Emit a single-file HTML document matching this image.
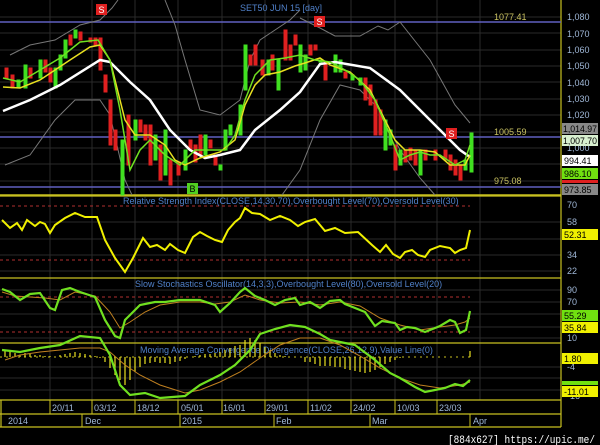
<!DOCTYPE html>
<html><head><meta charset="utf-8"><style>
html,body{margin:0;padding:0;background:#000;}
svg{display:block;font-family:"Liberation Sans",sans-serif;}
</style></head><body>
<svg width="600" height="445" viewBox="0 0 600 445" xmlns="http://www.w3.org/2000/svg">
<rect width="600" height="445" fill="#000"/>
<g stroke="#2a2a2a" stroke-width="1">
<path d="M50 0V400M92 0V400M135 0V400M178 0V400M222 0V400M265 0V400M308 0V400M351 0V400M395 0V400M437 0V400M480 0V400"/>
<path d="M0 17H561M0 33H561M0 50H561M0 66H561M0 82H561M0 99H561M0 115H561M0 132H561M0 148H561M0 164H561M0 181H561"/>
<path d="M0 222H561M0 239H561M0 255H561M0 271H561M0 290H561M0 302H561M0 314H561M0 327H561M0 338H561M0 367H561M0 378H561M0 390H561"/>
</g>
<g stroke="#c8c020" stroke-width="1.2" fill="none">
<path d="M561 0V427M0 196H561M0 278H561M0 343H561M0 400H561M0 414H561M0 427H561M1 400V427"/>
</g>
<g stroke="#6060c0" stroke-width="1.5"><path d="M0 22H561M0 137H561M0 187H561"/></g>
<path d="M0 195H561" stroke="#c8c020" stroke-width="1.5"/>
<g stroke="#b03030" stroke-dasharray="3,3"><path d="M0 206H470M0 260H470M0 297H470M0 332H470"/></g>
<path d="M0 357H470" stroke="#c8c020" stroke-dasharray="2,4"/>
<g stroke="#777" fill="none" stroke-width="1">
<polyline points="10,55 30,45 55,40 80,25 100,20 112,8 118,0"/>
<polyline points="165,0 175,25 185,60 200,110 220,115 240,100 250,60 260,40 275,30 290,20 300,10"/>
<polyline points="300,18 320,28 335,36 360,36 378,26 388,30 400,22 430,60 455,105 470,123"/>
<polyline points="5,165 30,155 55,120 75,100 100,100 110,115 125,180 132,195"/>
<polyline points="282,195 300,170 320,120 340,85 360,90 380,110 400,150 420,178 435,195"/>
</g>
<g stroke-width="1">
<g fill="#e02020" stroke="#e02020">
<rect x="5" y="68" width="3" height="10"/><rect x="11" y="75" width="3" height="13"/><rect x="29" y="68" width="3" height="10"/><rect x="44" y="60" width="3" height="12"/><rect x="49" y="68" width="3" height="14"/><rect x="69" y="35" width="3" height="10"/><rect x="79" y="32" width="3" height="8"/><rect x="89" y="38" width="3" height="4"/><rect x="94" y="38" width="3" height="7"/><rect x="99" y="38" width="3" height="32"/><rect x="104" y="75" width="3" height="17"/><rect x="109" y="100" width="3" height="45"/><rect x="114" y="130" width="3" height="20"/><rect x="127" y="115" width="3" height="50"/><rect x="139" y="120" width="3" height="12"/><rect x="144" y="125" width="3" height="15"/><rect x="149" y="125" width="3" height="40"/><rect x="159" y="145" width="3" height="35"/><rect x="169" y="160" width="3" height="25"/><rect x="177" y="162" width="3" height="13"/><rect x="189" y="140" width="3" height="10"/><rect x="194" y="145" width="3" height="17"/><rect x="199" y="135" width="3" height="20"/><rect x="209" y="140" width="3" height="8"/><rect x="214" y="155" width="3" height="10"/><rect x="249" y="55" width="3" height="10"/><rect x="254" y="45" width="3" height="20"/><rect x="261" y="60" width="3" height="15"/><rect x="271" y="55" width="3" height="15"/><rect x="284" y="30" width="3" height="30"/><rect x="289" y="45" width="3" height="15"/><rect x="294" y="35" width="3" height="10"/><rect x="309" y="45" width="3" height="10"/><rect x="314" y="45" width="3" height="5"/><rect x="324" y="62" width="3" height="18"/><rect x="344" y="72" width="3" height="6"/><rect x="364" y="78" width="3" height="22"/><rect x="369" y="85" width="3" height="20"/><rect x="374" y="100" width="3" height="35"/><rect x="379" y="110" width="3" height="25"/><rect x="394" y="145" width="3" height="25"/><rect x="404" y="150" width="3" height="12"/><rect x="409" y="148" width="3" height="12"/><rect x="414" y="150" width="3" height="15"/><rect x="424" y="150" width="3" height="10"/><rect x="434" y="150" width="3" height="10"/><rect x="444" y="150" width="3" height="10"/><rect x="449" y="155" width="3" height="15"/><rect x="454" y="160" width="3" height="15"/><rect x="459" y="165" width="3" height="15"/>
</g>
<g fill="#40e020" stroke="#40e020">
<rect x="17" y="80" width="3" height="8"/><rect x="24" y="65" width="3" height="23"/><rect x="39" y="60" width="3" height="18"/><rect x="54" y="68" width="3" height="20"/><rect x="59" y="55" width="3" height="15"/><rect x="64" y="40" width="3" height="18"/><rect x="74" y="30" width="3" height="8"/><rect x="121" y="140" width="3" height="55"/><rect x="134" y="120" width="3" height="20"/><rect x="154" y="135" width="3" height="25"/><rect x="164" y="130" width="3" height="45"/><rect x="184" y="150" width="3" height="20"/><rect x="204" y="135" width="3" height="20"/><rect x="219" y="165" width="3" height="5"/><rect x="224" y="130" width="3" height="20"/><rect x="229" y="125" width="3" height="10"/><rect x="239" y="105" width="3" height="30"/><rect x="244" y="45" width="3" height="45"/><rect x="267" y="60" width="3" height="15"/><rect x="277" y="60" width="3" height="30"/><rect x="299" y="45" width="3" height="27"/><rect x="304" y="55" width="3" height="15"/><rect x="319" y="60" width="3" height="2"/><rect x="334" y="55" width="3" height="17"/><rect x="339" y="60" width="3" height="12"/><rect x="351" y="75" width="3" height="5"/><rect x="359" y="78" width="3" height="7"/><rect x="384" y="120" width="3" height="30"/><rect x="389" y="130" width="3" height="15"/><rect x="399" y="150" width="3" height="15"/><rect x="419" y="150" width="3" height="25"/><rect x="464" y="160" width="3" height="10"/><rect x="470" y="133" width="3" height="39"/>
</g>
</g>
<polyline fill="none" stroke="#fff" stroke-width="2.5" points="3,111 30,100 60,85 100,60 110,62 130,82 150,100 170,130 190,150 205,158 220,155 240,150 255,130 280,110 300,92 320,64 335,62 370,68 400,90 430,120 460,150 470,157"/>
<polyline fill="none" stroke="#e8e020" stroke-width="1.5" points="3,87 20,88 40,80 55,70 70,60 90,47 100,45 110,60 125,120 135,135 150,135 165,145 175,160 185,165 200,158 220,152 235,140 245,105 255,85 265,75 280,72 295,66 305,63 320,58 330,65 350,72 370,90 385,120 395,140 405,150 420,150 435,152 450,165 465,165 470,155"/>
<polyline fill="none" stroke="#70e020" stroke-width="1.5" points="3,78 20,82 40,70 60,58 80,42 98,40 110,60 120,110 130,170 140,150 150,140 165,155 180,165 195,150 210,150 225,150 235,135 245,100 255,75 270,60 285,58 300,55 315,60 330,62 345,70 360,80 375,100 390,135 400,160 410,155 420,152 430,155 440,155 455,165 465,160 470,145"/>
<rect x="96" y="4" width="11" height="11" fill="#e02020"/><text x="101.5" y="13" font-size="9" fill="#fff" text-anchor="middle">S</text>
<rect x="314" y="16" width="11" height="11" fill="#e02020"/><text x="319.5" y="25" font-size="9" fill="#fff" text-anchor="middle">S</text>
<rect x="446" y="128" width="11" height="11" fill="#e02020"/><text x="451.5" y="137" font-size="9" fill="#fff" text-anchor="middle">S</text>
<rect x="187" y="183" width="11" height="11" fill="#50d020"/><text x="192.5" y="192" font-size="9" fill="#000" text-anchor="middle">B</text>
<g font-size="9" fill="#5080c8">
<text x="240" y="11">SET50 JUN 15   [day]</text>
<text x="123" y="204">Relative Strength Index(CLOSE,14,30,70),Overbought Level(70),Oversold Level(30)</text>
<text x="135" y="287">Slow Stochastics Oscillator(14,3,3),Overbought Level(80),Oversold Level(20)</text>
<text x="140" y="353">Moving Average Convergence Divergence(CLOSE,26,12,9),Value Line(0)</text>
</g>
<g font-size="9" fill="#c8c060">
<text x="494" y="20">1077.41</text><text x="494" y="135">1005.59</text><text x="494" y="184">975.08</text>
</g>
<g font-size="9" fill="#a0b8d8">
<text x="567" y="20">1,080</text><text x="567" y="37">1,070</text><text x="567" y="53">1,060</text><text x="567" y="69">1,050</text><text x="567" y="86">1,040</text><text x="567" y="102">1,030</text><text x="567" y="118">1,020</text><text x="567" y="151">1,000</text>
<text x="567" y="208">70</text><text x="567" y="225">58</text><text x="567" y="258">34</text><text x="567" y="274">22</text>
<text x="567" y="293">90</text><text x="567" y="305">70</text><text x="567" y="341">10</text>
<text x="567" y="370">-4</text><text x="567" y="399">-16</text>
</g>
<g font-size="9">
<rect x="562" y="123" width="36" height="11" fill="#888"/><text x="563" y="132" fill="#000" textLength="34" lengthAdjust="spacingAndGlyphs">1,014.97</text>
<rect x="562" y="135" width="36" height="11" fill="#d8f0d0"/><text x="563" y="144" fill="#000" textLength="34" lengthAdjust="spacingAndGlyphs">1,007.70</text>
<rect x="562" y="155" width="36" height="11" fill="#fff"/><text x="564" y="164" fill="#000">994.41</text>
<rect x="562" y="168" width="36" height="11" fill="#70e010"/><text x="564" y="177" fill="#000">986.10</text>
<rect x="562" y="180" width="36" height="3" fill="#e02020"/>
<rect x="562" y="184" width="36" height="11" fill="#888"/><text x="564" y="193" fill="#000">973.85</text>
<rect x="562" y="229" width="36" height="11" fill="#f0f000"/><text x="564" y="238" fill="#000">52.31</text>
<rect x="562" y="310" width="36" height="11" fill="#70e010"/><text x="564" y="319" fill="#000">55.29</text>
<rect x="562" y="322" width="36" height="11" fill="#f0f000"/><text x="564" y="331" fill="#000">35.84</text>
<rect x="562" y="353" width="36" height="11" fill="#f0f000"/><text x="564" y="362" fill="#000">1.80</text>
<rect x="562" y="381" width="36" height="4" fill="#70e010"/>
<rect x="562" y="386" width="36" height="11" fill="#f0f000"/><text x="564" y="395" fill="#000">-11.01</text>
</g>
<polyline fill="none" stroke="#f0f000" stroke-width="2" points="2,220 10,228 17,223 22,230 27,220 35,226 40,222 45,224 50,233 55,225 65,218 75,213 85,217 97,217 105,240 115,258 125,272 133,258 143,238 150,247 157,245 165,250 170,244 178,250 185,253 193,237 200,232 207,236 215,240 222,242 228,230 235,222 240,218 245,208 252,213 260,214 270,220 280,216 290,220 298,226 305,222 315,219 325,231 335,228 345,233 358,232 372,245 380,252 386,245 393,254 400,258 405,252 412,250 418,255 425,257 430,250 440,246 450,248 455,253 460,250 466,248 470,230"/>
<polyline fill="none" stroke="#c08020" stroke-width="1" points="2,292 15,296 30,297 45,298 60,300 75,292 95,296 110,312 120,328 130,322 145,312 160,305 180,302 200,302 215,304 230,302 245,295 260,300 280,303 300,302 320,305 340,302 360,306 380,318 400,325 420,330 440,327 455,325 465,322 470,318"/>
<polyline fill="none" stroke="#70e020" stroke-width="2.2" points="2,289 10,292 20,300 30,294 40,293 50,308 55,310 62,290 70,288 80,292 95,297 105,320 115,336 120,338 125,320 140,305 155,302 165,302 180,300 200,300 215,305 220,312 230,303 240,292 245,288 255,296 265,300 275,305 285,300 295,298 300,305 310,302 320,308 330,301 340,300 345,304 355,308 365,312 375,326 382,321 395,323 400,330 407,327 415,328 425,332 430,330 440,326 450,320 455,322 460,333 466,330 470,311"/>
<path stroke="#e8e020" stroke-width="1.2" d="M5 357V350M10 357V352M15 357V353M20 357V355M25 357V353M30 357V354M35 357V355M40 357V355M45 357V356M50 357V356M55 357V357M60 357V355M65 357V354M70 357V353M75 357V352M80 357V353M85 357V354M90 357V355M95 357V356M100 357V358M105 357V362M110 357V368M115 357V375M120 357V380M125 357V385M130 357V380M135 357V372M140 357V367M145 357V364M150 357V363M155 357V362M160 357V363M165 357V363M170 357V364M175 357V362M180 357V361M185 357V359M190 357V357M195 357V356M200 357V355M205 357V354M210 357V354M215 357V353M220 357V352M225 357V350M230 357V348M235 357V346M240 357V345M245 357V340M250 357V338M255 357V340M260 357V343M265 357V347M270 357V350M275 357V353M280 357V355M285 357V356M290 357V357M305 357V362M310 357V362M315 357V364M320 357V366M325 357V366M330 357V366M335 357V367M340 357V367M345 357V369M350 357V370M355 357V371M360 357V372M365 357V373M370 357V372M375 357V370M380 357V367M385 357V364M390 357V362M395 357V360M400 357V358M470 357V351"/>
<polyline fill="none" stroke="#c08020" stroke-width="1" points="5,360 20,355 40,352 60,350 80,348 100,348 110,352 125,365 140,375 160,385 185,393 200,390 220,382 240,372 260,358 280,345 300,338 320,338 340,345 360,356 380,368 400,378 420,385 440,388 460,385 470,382"/>
<polyline fill="none" stroke="#70e020" stroke-width="2.2" points="2,350 20,352 40,348 60,345 80,336 100,338 110,355 120,385 130,395 145,393 160,398 185,396 200,385 220,375 235,365 250,350 260,334 275,329 290,325 305,327 320,334 330,340 345,343 355,345 375,360 390,373 400,378 415,387 425,392 435,390 445,388 455,384 463,386 470,380"/>
<g font-size="9" fill="#a0b8d8">
<path d="M50 400V414M92 400V414M135 400V414M178 400V414M222 400V414M265 400V414M308 400V414M351 400V414M395 400V414M437 400V414M82 414V427M180 414V427M274 414V427M370 414V427M470 414V427" stroke="#c8c020"/>
<text x="52" y="411">20/11</text><text x="94" y="411">03/12</text><text x="137" y="411">18/12</text><text x="181" y="411">05/01</text><text x="223" y="411">16/01</text><text x="266" y="411">29/01</text><text x="310" y="411">11/02</text><text x="353" y="411">24/02</text><text x="397" y="411">10/03</text><text x="439" y="411">23/03</text>
<text x="8" y="424">2014</text><text x="85" y="424">Dec</text><text x="182" y="424">2015</text><text x="276" y="424">Feb</text><text x="372" y="424">Mar</text><text x="473" y="424">Apr</text>
</g>
<text x="448" y="443" font-size="11" fill="#fff" font-family="Liberation Mono, monospace" textLength="147" lengthAdjust="spacingAndGlyphs">[884x627] https://upic.me/</text>
</svg>
</body></html>
